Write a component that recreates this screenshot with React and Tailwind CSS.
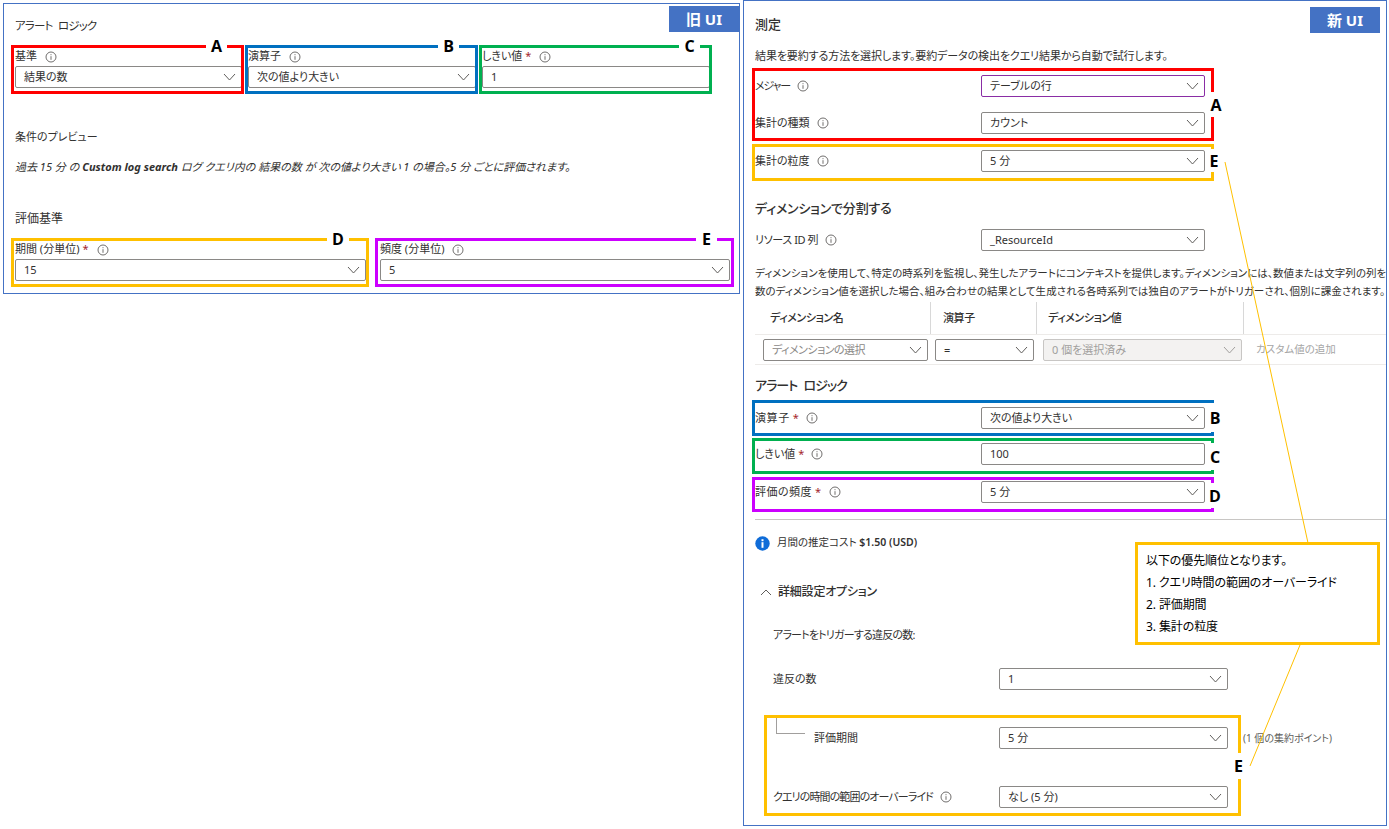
import React from "react";

function Info({ className = "" }) {
  return (
    <svg width="12" height="12" viewBox="0 0 12 12" fill="none" stroke="#605e5c" strokeWidth="0.9" className={`shrink-0 ${className}`}>
      <circle cx="6" cy="6" r="5" />
      <path d="M6 5.2v3.6M6 3.2v1" />
    </svg>
  );
}

function Chevron({ color = "#605e5c" }) {
  return (
    <svg width="13" height="8" viewBox="0 0 13 8" fill="none" stroke={color} strokeWidth="1" className="shrink-0">
      <path d="M1 1l5.5 6L12 1" />
    </svg>
  );
}

function Star() {
  return <span className="text-[#a4262c] ml-[3px]">*</span>;
}

// ドロップダウン
function Select({ value, className = "", textClass = "", disabled = false }) {
  return (
    <div
      className={`h-[22px] min-w-0 flex items-center justify-between pl-2 pr-[5px] border rounded-[2px] text-[11px] whitespace-nowrap ${
        disabled ? "bg-[#f3f2f1] border-[#c8c6c4] text-[#a19f9d]" : "bg-white border-[#8a8886] text-[#323130]"
      } ${className}`}
    >
      <span className={`pt-px ${textClass}`}>{value}</span>
      <Chevron color={disabled ? "#a19f9d" : "#605e5c"} />
    </div>
  );
}

function Input({ value }) {
  return (
    <div className="h-[22px] flex items-center px-2 bg-white border border-[#8a8886] rounded-[2px] text-[11px] text-[#323130]">
      {value}
    </div>
  );
}

function OldField({ label, required, children }) {
  return (
    <div>
      <div className="h-[19px] flex items-center gap-[8px] text-[11px] text-[#323130]">
        <span>
          {label}
          {required && <Star />}
        </span>
        <Info />
      </div>
      {children}
    </div>
  );
}

function NewRow({ label, required, labelClass = "", className = "", children }) {
  return (
    <div className={`grid grid-cols-[226px_224px] items-center ${className}`}>
      <div className="flex items-center gap-[7px] text-[11px] text-[#323130]">
        <span className={labelClass}>
          {label}
          {required && <Star />}
        </span>
        <Info />
      </div>
      {children}
    </div>
  );
}

function OldPanel() {
  return (
    <section className="shrink-0 w-[737px] h-[291px] border border-[#4472c4] pl-[11px] pt-[14px]">
      <div className="h-4 text-[11.5px] leading-4 tracking-[-0.8px] [word-spacing:3px] text-[#323130]">アラート ロジック</div>
      <div className="mt-[13px] grid grid-cols-[227px_228px_228px] gap-x-[6px]">
        <OldField label="基準">
          <Select value="結果の数" />
        </OldField>
        <OldField label="演算子">
          <Select value="次の値より大きい" />
        </OldField>
        <OldField label="しきい値" required>
          <Input value="1" />
        </OldField>
      </div>
      <div className="mt-[41px] h-4 text-[11px] leading-4 text-[#323130]">条件のプレビュー</div>
      <p className="mt-[14px] h-4 text-[11px] leading-4 italic text-[#323130]">
        過去 15 分 の <b>Custom log search</b> ログ クエリ内の 結果の数 が 次の値より大きい 1 の場合。5 分 ごとに評価されます。
      </p>
      <div className="mt-[36px] h-4 text-[12px] leading-4 text-[#323130]">評価基準</div>
      <div className="mt-[13px] grid grid-cols-[351px_350px] gap-x-[14px]">
        <OldField label="期間 (分単位)" required>
          <Select value="15" />
        </OldField>
        <OldField label="頻度 (分単位)">
          <Select value="5" />
        </OldField>
      </div>
    </section>
  );
}

function NewPanel() {
  return (
    <section className="shrink-0 w-[644px] h-[826px] -mt-[3px] ml-[3px] border border-[#4472c4] pl-[11px] pt-[13px] overflow-hidden">
      <h2 className="h-5 text-[13px] leading-5 font-medium text-[#323130]">測定</h2>
      <p className="mt-[14px] h-4 text-[11px] leading-4 tracking-[-0.1px] text-[#323130] whitespace-nowrap">
        結果を要約する方法を選択します。要約データの検出をクエリ結果から自動で試行します。
      </p>
      <NewRow label="メジャー" labelClass="tracking-[-1.2px]" className="mt-[11px]">
        <Select value="テーブルの行" className="border-[#8a2da5]!" />
      </NewRow>
      <NewRow label="集計の種類" className="mt-[15px]">
        <Select value="カウント" />
      </NewRow>
      <NewRow label="集計の粒度" className="mt-[16px]">
        <Select value="5 分" />
      </NewRow>

      <h2 className="mt-[26px] h-5 text-[13px] leading-5 tracking-[-0.2px] font-medium text-[#323130]">ディメンションで分割する</h2>
      <NewRow label="リソース ID 列" labelClass="tracking-[-0.4px]" className="mt-[11px]">
        <Select value="_ResourceId" />
      </NewRow>
      <p className="mt-[13px] text-[10.5px] leading-[18px] text-[#323130] whitespace-nowrap">
        ディメンションを使用して、特定の時系列を監視し、発生したアラートにコンテキストを提供します。ディメンションには、数値または文字列の列を
        <br />
        <span className="tracking-[0.02px]">
          数のディメンション値を選択した場合、組み合わせの結果として生成される各時系列では独自のアラートがトリガーされ、個別に課金されます。
        </span>
      </p>

      {/* ディメンション テーブル */}
      <div className="mt-[2px] h-[33px] grid grid-cols-[176px_106px_207px_1fr] border-b border-[#edebe9] text-[11px] tracking-[-0.4px] font-medium text-[#323130]">
        <div className="pl-[15px] flex items-center border-r border-[#d8d8d8]">ディメンション名</div>
        <div className="pl-[12px] flex items-center border-r border-[#d8d8d8]">演算子</div>
        <div className="pl-[11px] flex items-center border-r border-[#d8d8d8]">ディメンション値</div>
        <div />
      </div>
      <div className="h-[30px] flex items-start pt-[4px] pl-2 border-b border-[#edebe9]">
        <Select value="ディメンションの選択" textClass="text-[#8a8886] tracking-[-0.5px]" className="w-[165px]" />
        <Select value="=" className="w-[99px] ml-[7px]" />
        <Select value="0 個を選択済み" disabled className="w-[199px] ml-[9px]" />
        <span className="ml-[14px] text-[10.5px] leading-[20px] text-[#a6a6a6] whitespace-nowrap">カスタム値の追加</span>
      </div>

      <h2 className="mt-[10px] h-5 text-[13px] leading-5 tracking-[-1px] [word-spacing:4px] font-medium text-[#323130]">アラート ロジック</h2>
      <NewRow label="演算子" required labelClass="tracking-[0.6px]" className="mt-[12px]">
        <Select value="次の値より大きい" />
      </NewRow>
      <NewRow label="しきい値" required className="mt-[14px]">
        <Input value="100" />
      </NewRow>
      <NewRow label="評価の頻度" required labelClass="tracking-[0.5px]" className="mt-[16px]">
        <Select value="5 分" />
      </NewRow>

      <div className="mt-[16px] border-t border-[#c8c6c4]" />

      <div className="mt-[15px] h-4 flex items-center text-[10.5px] text-[#323130]">
        <svg width="15" height="15" viewBox="0 0 15 15" className="shrink-0">
          <circle cx="7.5" cy="7.5" r="7.2" fill="#0f6cd8" />
          <rect x="6.5" y="6.2" width="2" height="5.6" fill="#fff" />
          <rect x="6.5" y="3.2" width="2" height="2" fill="#fff" />
        </svg>
        <span className="ml-[7px]">
          月間の推定コスト <b className="font-semibold">$1.50 (USD)</b>
        </span>
      </div>

      <div className="mt-[31px] h-5 flex items-center text-[12px] font-medium tracking-[-0.2px] text-[#323130]">
        <svg width="12" height="7" viewBox="0 0 12 7" fill="none" stroke="#605e5c" className="ml-[5px] shrink-0">
          <path d="M1 6l5-5 5 5" />
        </svg>
        <span className="ml-[6px]">詳細設定オプション</span>
      </div>

      <div className="mt-[25px] ml-[18px] h-4 text-[11px] leading-4 tracking-[-0.8px] text-[#323130]">アラートをトリガーする違反の数:</div>

      <div className="ml-[18px]">
        <div className="mt-[25px] grid grid-cols-[226px_229px] items-center text-[11px] text-[#323130]">
          <span>違反の数</span>
          <Select value="1" />
        </div>
        <div className="mt-[37px] grid grid-cols-[226px_229px_1fr] items-center text-[11px] text-[#323130]">
          <span className="pl-[41px]">評価期間</span>
          <Select value="5 分" />
          <span className="ml-[15px] text-[10px] text-[#605e5c] whitespace-nowrap">(1 個の集約ポイント)</span>
        </div>
        <div className="mt-[37px] grid grid-cols-[226px_229px] items-center text-[11px] text-[#323130]">
          <span className="flex items-center gap-[7px] whitespace-nowrap">
            <span className="tracking-[-0.9px]">クエリの時間の範囲のオーバーライド</span>
            <Info />
          </span>
          <Select value="なし (5 分)" />
        </div>
      </div>
    </section>
  );
}

// 注釈の枠 (画面の上に重ねる)
const frames = [
  "left-[11px] top-[45px] w-[233px] h-[49px] border-[#ff0000]",
  "left-[245px] top-[45px] w-[233px] h-[49px] border-[#0070c0]",
  "left-[479px] top-[45px] w-[233px] h-[49px] border-[#00b050]",
  "left-[11px] top-[238px] w-[358px] h-[49px] border-[#ffc000]",
  "left-[375px] top-[238px] w-[359px] h-[49px] border-[#cc00ff]",
  "left-[752px] top-[68px] w-[462px] h-[73px] border-[#ff0000]",
  "left-[752px] top-[144px] w-[462px] h-[37px] border-[#ffc000]",
  "left-[752px] top-[400px] w-[462px] h-[36px] border-[#0070c0]",
  "left-[752px] top-[438px] w-[462px] h-[36px] border-[#00b050]",
  "left-[752px] top-[477px] w-[462px] h-[35px] border-[#cc00ff]",
  "left-[764px] top-[715px] w-[477px] h-[101px] border-[#ffc000]",
];

const marks = [
  { text: "A", cls: "left-[206px] top-[35px] w-[21px] h-[22px]" },
  { text: "B", cls: "left-[438px] top-[35px] w-[21px] h-[22px]" },
  { text: "C", cls: "left-[679px] top-[35px] w-[21px] h-[22px]" },
  { text: "D", cls: "left-[327px] top-[228px] w-[22px] h-[22px]" },
  { text: "E", cls: "left-[696px] top-[228px] w-[21px] h-[22px]" },
  { text: "A", cls: "left-[1207px] top-[92px] w-[18px] h-[25px]" },
  { text: "E", cls: "left-[1206px] top-[149px] w-[16px] h-[23px]" },
  { text: "B", cls: "left-[1206px] top-[403px] w-[18px] h-[29px]" },
  { text: "C", cls: "left-[1206px] top-[443px] w-[18px] h-[27px]" },
  { text: "D", cls: "left-[1206px] top-[483px] w-[18px] h-[25px]" },
  { text: "E", cls: "left-[1232px] top-[753px] w-[13px] h-[26px]" },
];

function Overlay() {
  return (
    <>
      {frames.map((cls) => (
        <div key={cls} className={`absolute border-[3px] ${cls}`} />
      ))}
      {marks.map((m) => (
        <div
          key={m.cls}
          className={`absolute flex items-center justify-center bg-white text-[16px] leading-none font-bold text-black font-['Open_Sans',sans-serif] ${m.cls}`}
        >
          {m.text}
        </div>
      ))}

      {/* 評価期間のツリー線 */}
      <div className="absolute left-[776px] top-[718px] w-[29px] h-[16px] border-l border-b border-[#a19f9d]" />

      {/* 引き出し線 */}
      <svg width="1389" height="829" className="absolute left-0 top-0" fill="none" stroke="#ffc000">
        <path d="M1225 162L1308 543" />
        <path d="M1300 645L1250 766" />
      </svg>

      <div className="absolute left-[669px] top-[6px] w-[70px] h-[26px] flex items-center justify-center bg-[#4472c4] text-white text-[15px] font-bold">
        旧 UI
      </div>
      <div className="absolute left-[1310px] top-[7px] w-[70px] h-[26px] flex items-center justify-center bg-[#4472c4] text-white text-[15px] font-bold">
        新 UI
      </div>

      <div className="absolute left-[1135px] top-[542px] w-[245px] h-[103px] bg-white border-[3px] border-[#ffc000] pl-[8px] pt-[5px] text-[12px] leading-[22px] tracking-[-0.1px] text-black">
        <p>以下の優先順位となります。</p>
        <p>1. クエリ時間の範囲のオーバーライド</p>
        <p>2. 評価期間</p>
        <p>3. 集計の粒度</p>
      </div>
    </>
  );
}

export default function App() {
  return (
    <div className="relative w-[1389px] h-[829px] overflow-hidden bg-white pl-[3px] pt-[3px] flex items-start font-['Noto_Sans','Noto_Sans_CJK_JP',sans-serif] [font-feature-settings:'palt']">
      <OldPanel />
      <NewPanel />
      <Overlay />
    </div>
  );
}
